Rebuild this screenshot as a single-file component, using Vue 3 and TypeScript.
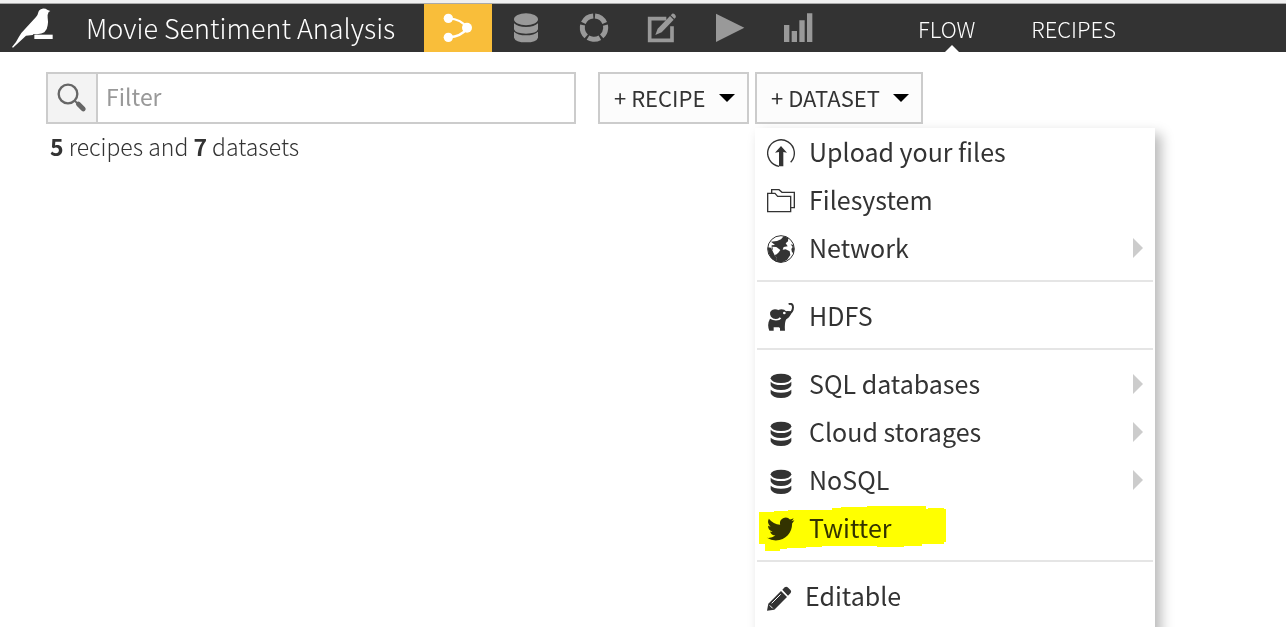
<script setup lang="ts">
import { ref } from 'vue'

interface MenuItem {
  label: string
  icon: string
  submenu?: boolean
  highlighted?: boolean
}

const filter = ref('')

const tools = [
  { name: 'Flow', icon: 'flow', active: true },
  { name: 'Datasets', icon: 'database', active: false },
  { name: 'Analyses', icon: 'ring', active: false },
  { name: 'Notebooks', icon: 'edit', active: false },
  { name: 'Jobs', icon: 'play', active: false },
  { name: 'Dashboards', icon: 'bars', active: false },
]

const tabs = [
  { label: 'FLOW', active: true },
  { label: 'RECIPES', active: false },
]

const groups: MenuItem[][] = [
  [
    { label: 'Upload your files', icon: 'upload' },
    { label: 'Filesystem', icon: 'folder' },
    { label: 'Network', icon: 'globe', submenu: true },
  ],
  [{ label: 'HDFS', icon: 'elephant' }],
  [
    { label: 'SQL databases', icon: 'db', submenu: true },
    { label: 'Cloud storages', icon: 'db', submenu: true },
    { label: 'NoSQL', icon: 'db', submenu: true },
    { label: 'Twitter', icon: 'twitter', highlighted: true },
  ],
  [{ label: 'Editable', icon: 'pencil' }],
]
</script>

<template>
  <div class="page">
    <header class="topbar">
      <a class="logo" href="#" aria-label="Home">
        <svg viewBox="0 0 126 120" width="42" height="40">
          <path fill="#fff" d="M115 9 L107 6 Q100 1 91 2 Q81 4 79 13 Q78 20 72 27 L28 75 Q20 87 12 102 L0 117 L3 119 L42 83 L62 81 L65 78 Q88 80 97 73 Q106 65 107 52 Q109 40 107 29 Q106 19 110 12 Z" />
          <path fill="#fff" d="M67 80h55v13h-55z" />
        </svg>
      </a>
      <h1 class="title">Movie Sentiment Analysis</h1>
      <nav class="tools" aria-label="Project">
        <a v-for="t in tools" :key="t.name" href="#" class="tool" :class="{ active: t.active }" :aria-label="t.name">
          <svg v-if="t.icon === 'flow'" viewBox="0 0 90 90" width="30" height="30">
            <path d="M17 16 Q55 18 73 45 Q55 71 17 73" fill="none" stroke="currentColor" stroke-width="7" />
            <g fill="currentColor"><circle cx="16" cy="16" r="14" /><circle cx="72" cy="44" r="15" /><circle cx="16" cy="73" r="14" /></g>
          </svg>
          <svg v-else-if="t.icon === 'database'" viewBox="0 0 90 90" width="30" height="30" fill="currentColor">
            <ellipse cx="45" cy="19" rx="36" ry="18" />
            <path d="M9 31 Q20 42 45 42 Q70 42 81 31 V49 Q77 62 45 62 Q13 62 9 49Z" />
            <path d="M9 56 Q20 67 45 67 Q70 67 81 56 V74 Q77 88 45 88 Q13 88 9 74Z" />
          </svg>
          <svg v-else-if="t.icon === 'ring'" viewBox="0 0 90 90" width="30" height="30">
            <circle cx="45" cy="44" r="35" fill="none" stroke="currentColor" stroke-width="15" pathLength="100" stroke-dasharray="17 3" transform="rotate(-85 45 44)" />
          </svg>
          <svg v-else-if="t.icon === 'edit'" viewBox="0 0 90 90" width="30" height="30">
            <path d="M58 17 H8 V82 H75 V40" fill="none" stroke="currentColor" stroke-width="11" />
            <path d="M69 9 L80 20 L44 58 L25 66 L32 47 Z" fill="currentColor" />
            <path d="M73 5 q4 -6 10 -1 q6 6 2 11 l-3 2 -11 -10z" fill="currentColor" />
          </svg>
          <svg v-else-if="t.icon === 'play'" viewBox="0 0 90 90" width="30" height="30">
            <path d="M3 2 L88 44 L3 87Z" fill="currentColor" />
          </svg>
          <svg v-else viewBox="0 0 90 90" width="30" height="30" fill="currentColor">
            <path d="M3 36h16v51h-16zM26 54h16v33h-16zM49 22h16v65h-16zM72 1h16v86h-16z" />
          </svg>
        </a>
      </nav>
      <nav class="tabs" aria-label="Views">
        <a v-for="t in tabs" :key="t.label" href="#" class="tab" :class="{ active: t.active }">{{ t.label }}</a>
      </nav>
    </header>

    <main class="content">
      <div class="toolbar">
        <div class="search">
          <label class="search-icon" for="filter" aria-label="Filter">
            <svg viewBox="0 0 90 90" width="30" height="30">
              <circle cx="33" cy="33" r="28" fill="none" stroke="#666" stroke-width="7" />
              <path d="M53 53 L63 63" stroke="#666" stroke-width="6" />
              <path d="M64 63 L79 78" stroke="#666" stroke-width="14" stroke-linecap="round" />
            </svg>
          </label>
          <input id="filter" v-model="filter" type="text" placeholder="Filter" />
        </div>
        <button type="button" class="add recipe"><span class="text">+ RECIPE</span><span class="caret"></span></button>
        <div class="dropdown">
          <button type="button" class="add" aria-haspopup="menu" aria-expanded="true"><span class="text">+ DATASET</span><span class="caret"></span></button>
          <div class="menu" role="menu">
            <div v-for="(group, gi) in groups" :key="gi" class="group" role="group">
              <button v-for="item in group" :key="item.label" type="button" role="menuitem" class="item" :class="item.icon">
                <span class="icon">
                  <svg v-if="item.icon === 'upload'" viewBox="0 0 84 84" width="28" height="28">
                    <path d="M36 82 A40 40 0 1 1 71 70" fill="none" stroke="#333" stroke-width="4" />
                    <path d="M42 21 L60 41 L49 39 V82 H36 V39 L24 41Z" fill="#333" />
                  </svg>
                  <svg v-else-if="item.icon === 'folder'" viewBox="0 0 84 84" width="28" height="28" fill="none" stroke="#333" stroke-width="4">
                    <path d="M2 19 H24 L32 28 H71 V74 H2Z" />
                    <path d="M14 19 V8 H36 L45 16 H82 V62 H72" />
                  </svg>
                  <svg v-else-if="item.icon === 'globe'" viewBox="0 0 84 84" width="28" height="28">
                    <circle cx="42" cy="42" r="40" fill="#fff" stroke="#333" stroke-width="3" />
                    <path fill="#333" d="M12 20 L30 18 L42 13 L50 4 L64 8 L63 19 L56 25 L62 34 L50 36 L47 44 L56 43 L68 49 L70 60 L60 75 L42 83 L27 80 L30 68 L24 62 L26 51 L14 42 L14 31 L24 30 Z" />
                    <path fill="#333" d="M2 37 L12 38 L18 50 L23 61 L30 68 L28 80 Q4 70 2 37Z" />
                    <path fill="#333" d="M71 28 L79 30 Q83 44 80 54 L75 52 L73 42 L77 36Z" />
                    <path fill="#fff" d="M16 35 L28 36 L40 45 L34 53 L26 60 L19 50Z" />
                  </svg>
                  <svg v-else-if="item.icon === 'elephant'" viewBox="0 0 84 84" width="28" height="28">
                    <path d="M65 3 Q78 0 78 13 Q78 29 62 35" fill="none" stroke="#333" stroke-width="6" />
                    <path fill="#333" d="M9 47 Q20 54 32 52 Q43 51 45 38 Q47 25 61 24 L74 25 Q72 40 58 49 Q52 58 54 83 H39 V76 L36 73 H20 V83 H7 Q-1 64 9 47Z" />
                    <path fill="#333" d="M12 41 Q4 26 17 20 Q25 16 36 22 Q43 25 41 36 Q39 48 26 48 Q18 48 12 41Z" />
                    <path fill="#333" d="M34 21 Q48 15 59 26 L48 46 L39 44Z" />
                    <circle cx="52" cy="30" r="4" fill="#fff" />
                  </svg>
                  <svg v-else-if="item.icon === 'db'" viewBox="0 -3 84 84" width="28" height="28" fill="#333">
                    <ellipse cx="42" cy="19" rx="31" ry="14" />
                    <path d="M11 29 Q20 39 42 39 Q64 39 73 29 V40 Q68 54 42 54 Q16 54 11 40Z" />
                    <path d="M11 53 Q20 62 42 62 Q64 62 73 53 V64 Q68 78 42 78 Q16 78 11 64Z" />
                  </svg>
                  <svg v-else-if="item.icon === 'twitter'" viewBox="0 0 24 24" width="28" height="28">
                    <path fill="#333" d="M23.5 4.6a9.8 9.8 0 0 1-2.8.8 4.9 4.9 0 0 0 2.1-2.7 9.8 9.8 0 0 1-3.1 1.2 4.9 4.9 0 0 0-8.4 4.5A14 14 0 0 1 1.6 3.2a4.9 4.9 0 0 0 1.5 6.6 4.9 4.9 0 0 1-2.2-.6v.1a4.9 4.9 0 0 0 3.9 4.8 4.9 4.9 0 0 1-2.2.1 4.9 4.9 0 0 0 4.6 3.4A9.9 9.9 0 0 1 0 19.6a14 14 0 0 0 7.500 2.200c9.100 0 14.300-7.700 14-14.600a9.900 9.900 0 0 0 2-2.600z" />
                  </svg>
                  <svg v-else viewBox="0 -3 84 84" width="28" height="28">
                    <path d="M42 21 L60 39 L22 77 L0 80 L4 59Z" fill="#333" />
                    <path d="M46 17 L53 10 Q58 6 62 10 L71 19 Q74 23 71 27 L63 35Z" fill="#333" />
                    <path d="M41 31 L14 58 M8 64 L17 73" stroke="#fff" stroke-width="3" fill="none" />
                  </svg>
                </span>
                <span class="label">{{ item.label }}</span>
                <span v-if="item.submenu" class="arrow"></span>
                <svg v-if="item.highlighted" class="marker" viewBox="0 0 187 46" width="187" height="46" aria-hidden="true">
                  <path fill="#ff0" d="M0 6 H15 V5 H29 V4 H73 V2 H82 V1 H108 V0 H167 V3 H169 V2 H185 V3 H187 V36 H185 V38 H163 V40 H145 V41 H118 V40 H63 V41 H47 V42 H28 V43 H21 V45 H6 V38 H0Z" />
                </svg>
              </button>
            </div>
          </div>
        </div>
      </div>
      <p class="summary"><strong>5</strong> recipes and <strong>7</strong> datasets</p>
    </main>
  </div>
</template>

<style>
body {
  margin: 0;
  background: #fff;
}
</style>

<style scoped>
.page {
  height: 100vh;
  overflow: hidden;
  box-sizing: border-box;
  border-top: 3px solid #f0f0f0;
  color: #333;
  font-family: "Noto Sans CJK SC", "Noto Sans", sans-serif;
}
a {
  color: inherit;
  text-decoration: none;
}
svg {
  display: block;
}
.topbar {
  display: flex;
  align-items: stretch;
  height: 48px;
  border-top: 1px solid #aaa;
  background: #333;
  color: #fff;
}
.logo {
  flex: 0 0 42px;
  padding: 4px 0 0 12px;
}
.title {
  flex: 0 0 370px;
  box-sizing: border-box;
  margin: 0;
  padding-left: 32px;
  font-size: 27px;
  font-weight: 300;
  line-height: 48px;
  white-space: nowrap;
}
.tools {
  display: flex;
}
.tool {
  display: flex;
  align-items: center;
  justify-content: center;
  width: 68px;
  color: #999;
}
.tool.active {
  background: #f9be3a;
  color: #fff;
}
.tabs {
  display: flex;
  gap: 56px;
  margin-left: 86px;
  font-size: 22px;
  font-weight: 300;
  line-height: 48px;
}
.tab {
  position: relative;
}
.tab.active::after {
  content: "";
  position: absolute;
  bottom: 0;
  left: 27px;
  border: 7px solid transparent;
  border-top: 0;
  border-bottom-color: #fff;
}
.content {
  padding: 20px 46px;
}
.toolbar {
  display: flex;
}
.search {
  display: flex;
  box-sizing: border-box;
  width: 530px;
  height: 52px;
  margin-right: 22px;
  border: 2px solid #ccc;
}
.search-icon {
  display: flex;
  align-items: center;
  justify-content: center;
  width: 48px;
  border-right: 2px solid #ccc;
  background: #f3f3f3;
}
.search input {
  flex: 1;
  min-width: 0;
  padding: 0 8px 4px;
  border: 0;
  outline: 0;
  background: #fff;
  color: #333;
  font: 400 23px "Noto Sans CJK SC", "Noto Sans", sans-serif;
}
.search input::placeholder {
  color: #999;
  opacity: 1;
}
.add {
  display: flex;
  align-items: center;
  justify-content: space-between;
  box-sizing: border-box;
  width: 168px;
  height: 52px;
  padding: 0 12px 0 14px;
  border: 2px solid #ccc;
  background: #fcfcfc;
  color: #333;
  font: 400 22px "Noto Sans CJK SC", "Noto Sans", sans-serif;
  white-space: nowrap;
}
.add.recipe {
  width: 151px;
  margin-right: 6px;
}
.text,
.label {
  padding-bottom: 2px;
}
.caret {
  border: 8px solid transparent;
  border-top-color: #000;
  border-bottom: 0;
}
.dropdown {
  position: relative;
}
.menu {
  position: absolute;
  top: 56px;
  left: 0;
  box-sizing: border-box;
  width: 400px;
  padding: 0 2px 24px;
  background: #fff;
  box-shadow: 6px 6px 12px rgba(0, 0, 0, 0.28);
}
.group + .group {
  margin-top: 8px;
  padding-top: 10px;
  border-top: 2px solid #e5e5e5;
}
.item {
  position: relative;
  display: flex;
  align-items: center;
  width: 100%;
  height: 48px;
  padding: 0 10px;
  border: 0;
  background: none;
  color: #333;
  font: 400 25px "Noto Sans CJK SC", "Noto Sans", sans-serif;
  text-align: left;
}
.icon {
  width: 28px;
  padding-top: 2px;
  margin-right: 14px;
}
.pencil .icon {
  margin-right: 10px;
}
.label {
  flex: 1;
}
.arrow {
  border: 10px solid transparent;
  border-left-color: #ccc;
  border-right: 0;
}
.marker {
  position: absolute;
  top: 2px;
  left: 2px;
  mix-blend-mode: multiply;
}
.summary {
  margin: 4px 0 0 4px;
  font-size: 23px;
  font-weight: 300;
  line-height: 36px;
}
.summary strong {
  font-weight: 700;
}
</style>
